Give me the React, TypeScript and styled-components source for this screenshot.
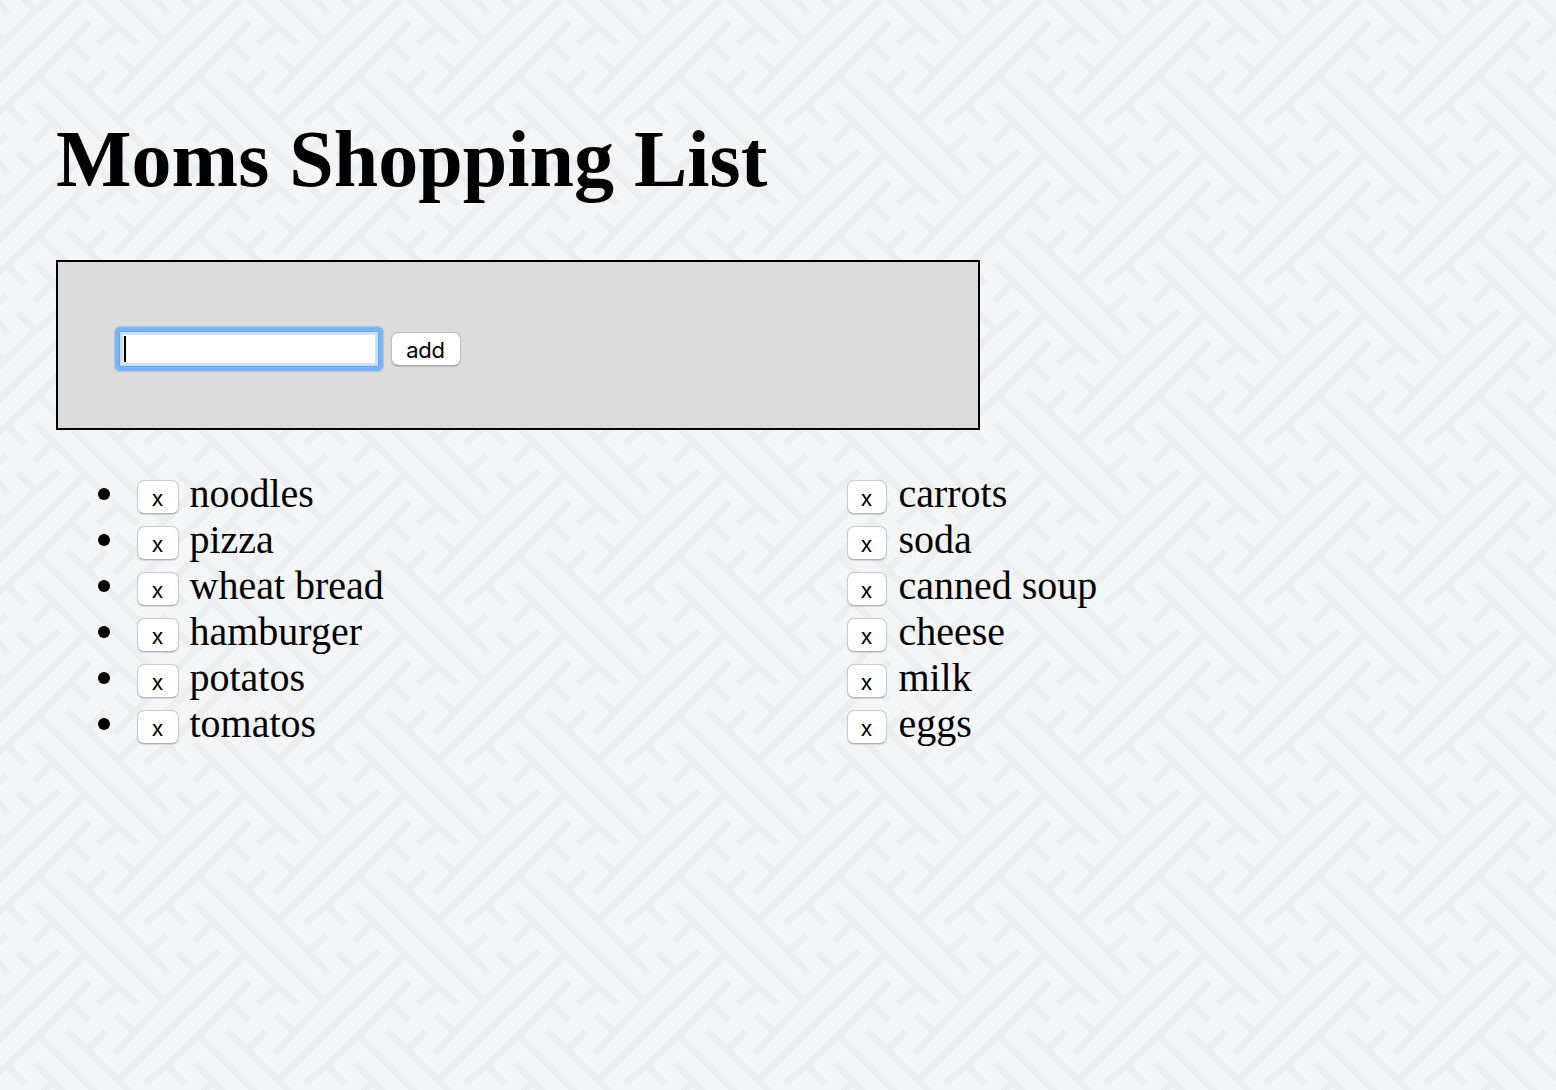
import React from "react";
import styled, { createGlobalStyle } from "styled-components";

// One repeat of the woven lattice, drawn in a 480-unit square.
const lattice = [
  "M657 64 L600 130 L505 226 L410 318 L343 372",
  "M600 125 L656 183 M410 313 L465 372",
  "M505 226 L690 410 L885 605",
  "M494 307 L550 366 L645 463 L740 558 L804 612",
  "M550 362 L495 423 M743 558 L684 612",
  "M645 463 L455 652 L265 840",
  "M566 454 L498 510 L405 603 L315 695 L255 761",
  "M498 512 L442 457 M315 697 L257 644",
  "M589 211 L650 268 L745 360 L835 455 L893 520",
  "M652 270 L708 213 M835 458 L889 406",
].join(" ");

const shifts = [-960, -480, 0, 480];
const copies = shifts
  .flatMap((x) => shifts.map((y) => `<path d='${lattice}' transform='translate(${x + 90} ${y})'/>`))
  .join("");
const tile = `<svg xmlns='http://www.w3.org/2000/svg' width='160' height='160' viewBox='0 0 480 480'><g fill='none' stroke='#edeef0' stroke-width='21' stroke-linejoin='round'>${copies}</g></svg>`;
const weave = `url("data:image/svg+xml,${encodeURIComponent(tile)}")`;

const GlobalStyle = createGlobalStyle`
  html {
    background: #f4f5f7 ${weave} 0 0 / 160px 160px;
  }
  body {
    margin: 0;
    color: #000;
    font: 40px/46px "Liberation Serif", "Times New Roman", serif;
  }
  * {
    box-sizing: border-box;
  }
`;

const Page = styled.main`
  min-height: 1090px;
  padding: 113px 40px 0 56px;
`;

const Title = styled.h1`
  margin: 0 0 55px;
  font-size: 80px;
  line-height: 92px;
  font-weight: bold;
`;

const Form = styled.form`
  display: flex;
  align-items: flex-start;
  gap: 12px;
  width: 924px;
  height: 170px;
  padding: 69px 61px;
  border: 2px solid #000;
  background: #dcdcdc;
`;

const Field = styled.div`
  width: 260px;
  height: 36px;
  padding: 4px;
  border: 1px solid #67a5ea;
  background: #fff;
  box-shadow: inset 0 0 0 3px #c8e0fb, 0 0 0 3px #7bb3f3, 0 0 1px 4px #7bb3f3, 0 0 1px 5px #a9c8ec;
  border-radius: 2px;
`;

const Caret = styled.span`
  display: block;
  width: 2px;
  height: 26px;
  background: #000;
`;

const Button = styled.button<{ $width: number }>`
  flex: none;
  width: ${(p) => p.$width}px;
  height: 34px;
  margin: 1px 0 0;
  padding: 2px 1px 0 0;
  border: 1px solid #cacacb;
  border-bottom-color: #b3b3b4;
  border-radius: 7px;
  background: #fff;
  background-clip: padding-box;
  box-shadow: 0 1px 1px rgba(0, 0, 0, 0.12);
  color: #000;
  font: 22px/28px Inter, "Noto Sans", sans-serif;
  letter-spacing: -0.2px;
`;

const AddButton = styled(Button)`
  border-color: #c0c0c0;
  border-bottom-color: #a8a8a8;
`;

const Columns = styled.div`
  display: grid;
  grid-template-columns: 710px 1fr;
  margin-top: 40px;
  padding-left: 81px;
`;

const List = styled.ul`
  margin: 0;
  padding: 0;
  list-style: none;
`;

const Item = styled.li<{ $bullet: boolean }>`
  display: flex;
  align-items: flex-start;
  gap: ${(p) => (p.$bullet ? 10.5 : 11.4)}px;
  height: 46px;
  position: relative;

  ${Button} {
    margin-top: 10px;
  }

  &::before {
    content: "";
    display: ${(p) => (p.$bullet ? "block" : "none")};
    position: absolute;
    left: -39px;
    top: 18px;
    width: 12px;
    height: 12px;
    border-radius: 50%;
    background: #000;
  }
`;

const Name = styled.span`
  padding-top: 1px;
`;

const left = ["noodles", "pizza", "wheat bread", "hamburger", "potatos", "tomatos"];
const right = ["carrots", "soda", "canned soup", "cheese", "milk", "eggs"];

function Groceries({ names, bullet }: { names: string[]; bullet: boolean }) {
  return (
    <List>
      {names.map((name) => (
        <Item key={name} $bullet={bullet}>
          <Button type="button" $width={bullet ? 42 : 40}>x</Button>
          <Name>{name}</Name>
        </Item>
      ))}
    </List>
  );
}

export default function App() {
  return (
    <>
      <GlobalStyle />
      <Page>
        <Title>Moms Shopping List</Title>
        <Form>
          <Field role="textbox">
            <Caret />
          </Field>
          <AddButton type="button" $width={70}>add</AddButton>
        </Form>
        <Columns>
          <Groceries names={left} bullet />
          <Groceries names={right} bullet={false} />
        </Columns>
      </Page>
    </>
  );
}
